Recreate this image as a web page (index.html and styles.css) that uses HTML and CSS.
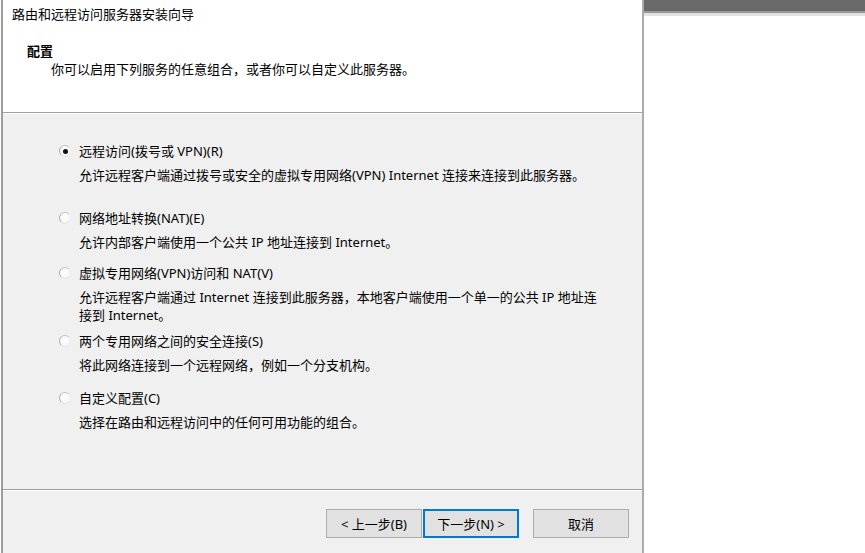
FILE: index.html
```html
<!DOCTYPE html>
<html lang="zh-CN">
<head>
    <meta charset="UTF-8">
    <meta name="viewport" content="width=device-width, initial-scale=1.0">
    <title>路由和远程访问服务器安装向导</title>
    <link rel="stylesheet" href="styles.css">
</head>
<body>
    <div class="screen">
        <div class="edge-left"></div>

        <div class="wizard">
            <div class="wizard-header">
                <div class="wizard-title">路由和远程访问服务器安装向导</div>
                <div class="page-title">配置</div>
                <div class="page-subtitle">你可以启用下列服务的任意组合，或者你可以自定义此服务器。</div>
            </div>

            <div class="wizard-body">
                <div class="option">
                    <div class="option-label">
                        <span class="radio checked"></span>
                        <span>远程访问(拨号或 VPN)(R)</span>
                    </div>
                    <div class="option-desc">允许远程客户端通过拨号或安全的虚拟专用网络(VPN) Internet 连接来连接到此服务器。</div>
                </div>

                <div class="option option-nat">
                    <div class="option-label">
                        <span class="radio"></span>
                        <span>网络地址转换(NAT)(E)</span>
                    </div>
                    <div class="option-desc">允许内部客户端使用一个公共 IP 地址连接到 Internet。</div>
                </div>

                <div class="option option-vpn-nat">
                    <div class="option-label">
                        <span class="radio"></span>
                        <span>虚拟专用网络(VPN)访问和 NAT(V)</span>
                    </div>
                    <div class="option-desc">允许远程客户端通过 Internet 连接到此服务器，本地客户端使用一个单一的公共 IP 地址连<br>接到 Internet。</div>
                </div>

                <div class="option option-secure">
                    <div class="option-label">
                        <span class="radio"></span>
                        <span>两个专用网络之间的安全连接(S)</span>
                    </div>
                    <div class="option-desc">将此网络连接到一个远程网络，例如一个分支机构。</div>
                </div>

                <div class="option option-custom">
                    <div class="option-label">
                        <span class="radio"></span>
                        <span>自定义配置(C)</span>
                    </div>
                    <div class="option-desc">选择在路由和远程访问中的任何可用功能的组合。</div>
                </div>
            </div>

            <div class="wizard-footer">
                <button class="btn">&lt; 上一步(B)</button>
                <button class="btn btn-default">下一步(N) &gt;</button>
                <button class="btn btn-cancel">取消</button>
            </div>
        </div>

        <div class="backdrop">
            <div class="backdrop-bar"></div>
        </div>
    </div>
</body>
</html>
```

FILE: styles.css
```css
* {
    margin: 0;
    padding: 0;
    box-sizing: border-box;
}

body {
    font-family: "Noto Sans", "Noto Sans CJK SC", sans-serif;
    font-size: 13px;
    color: #000;
    background: #fff;
    width: 865px;
    height: 553px;
    overflow: hidden;
}

.screen {
    display: flex;
    height: 553px;
}

.edge-left {
    width: 3px;
    border-left: 1px solid #fff;
    background: #9c9c9c;
}

.wizard {
    width: 641px;
    display: flex;
    flex-direction: column;
    border-right: 2px solid #ababab;
}

/* header */
.wizard-header {
    height: 114px;
    background: #fff;
    border-bottom: 1px solid #fff;
    box-shadow: inset 0 -1px 0 #a0a0a0;
    padding: 5px 0 0 9px;
    line-height: 18px;
}

.wizard-title {
    margin-bottom: 19px;
}

.page-title {
    font-weight: bold;
    padding-left: 15px;
}

.page-subtitle {
    padding-left: 39px;
}

/* body */
.wizard-body {
    height: 376px;
    background: #f0f0f0;
    padding: 28px 0 0 56px;
    border-bottom: 1px solid #a0a0a0;
}

.option-label {
    display: flex;
    align-items: center;
    gap: 8px;
    line-height: 18px;
}

.option-desc {
    margin-top: 6px;
    padding-left: 20px;
    line-height: 18px;
}

.option-nat {
    margin-top: 25px;
}

.option-vpn-nat {
    margin-top: 13px;
}

.option-secure {
    margin-top: 8px;
}

.option-custom {
    margin-top: 15px;
}

.radio {
    width: 12px;
    height: 12px;
    border-radius: 50%;
    border: 1px solid;
    border-color: #c2c2c2 #ececec #e4e4e4 #aeaeae;
    background: radial-gradient(circle at 40% 40%, #fff 0%, #f6f6f6 70%, #e6e6e6 100%);
    position: relative;
    flex-shrink: 0;
}

.radio.checked::after {
    content: '';
    position: absolute;
    left: 2.5px;
    top: 2.5px;
    width: 5px;
    height: 5px;
    border-radius: 50%;
    background: #111;
}

/* footer */
.wizard-footer {
    flex: 1;
    background: #f0f0f0;
    border-top: 1px solid #fff;
    display: flex;
    justify-content: flex-end;
    align-items: flex-start;
    padding: 18px 13px 0 0;
}

.btn {
    width: 96px;
    height: 29px;
    font-family: inherit;
    font-size: 13px;
    color: #000;
    background: #e1e1e1;
    border: 1px solid #adadad;
}

.btn-default {
    margin-left: 1px;
    border: 1px solid #0078d7;
    box-shadow: inset 0 0 0 1px #0078d7;
}

.btn-cancel {
    margin-left: 14px;
}

/* window behind */
.backdrop {
    flex: 1;
    background: #fff;
}

.backdrop-bar {
    height: 16px;
    background: #696969;
    border-bottom: 3px solid #e2e2e2;
    box-shadow: inset 0 -2px 0 #9a9a9a;
}
```
